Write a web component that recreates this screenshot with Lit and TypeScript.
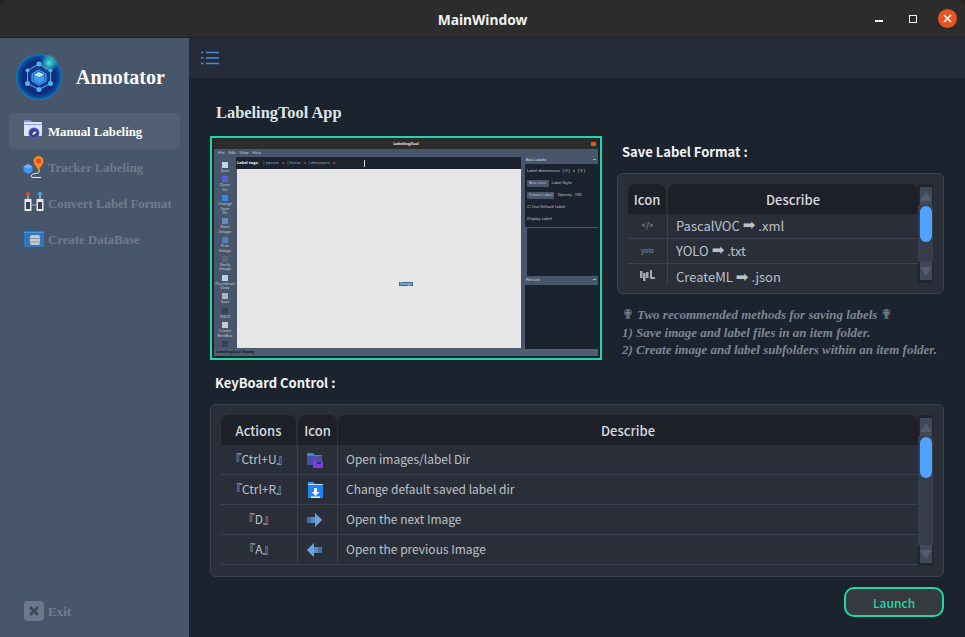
import { LitElement, html, css, svg } from 'lit';
import { customElement } from 'lit/decorators.js';

const ICONS = {
  manual: svg`<path d="M1 1h6l2 2h9a1 1 0 0 1 1 1v12a1 1 0 0 1-1 1H2a1 1 0 0 1-1-1z" fill="#dfe6fb"/><path d="M1 1h6l2 2H1z" fill="#7f8cf0"/><rect x="1" y="5" width="18" height="1" fill="#8f9cf4"/><circle cx="11" cy="14" r="5.500" fill="#4e57c9"/><circle cx="11" cy="14" r="4" fill="#39407a"/><path d="M9 15l3-3 1.500 1.500-3 2.500z" fill="#e8ecff"/>`,
  tracker: svg`<path d="M16 14v3c0 2-8 1-8 4 0 1 1 1.500 3 1.500h7" fill="none" stroke="#e6edf7" stroke-width="1"/><path d="M15.500 1a5 5 0 0 1 5 5c0 3-3 6-5 9-2-3-5-6-5-9a5 5 0 0 1 5-5z" fill="#f08c1c"/><circle cx="15.500" cy="6" r="2.500" fill="#e2492c"/><path d="M5 9l4.500 2.500v5L5 19l-4.500-2.500v-5z" fill="#3f94ee"/><path d="M5 9l4.500 2.500L5 14l-4.500-2.500z" fill="#6fb6fa"/>`,
  convert: svg`<circle cx="5" cy="3" r="2" fill="#e2492c"/><path d="M5 5v3M17 5v3" stroke="#dfe6ee"/><circle cx="17" cy="3" r="2" fill="#35b4ee"/><rect x="1.500" y="8" width="7" height="12" fill="#e6e9ee"/><rect x="3" y="11" width="4" height="7" fill="#39424f"/><rect x="13.500" y="8" width="7" height="12" fill="#e6e9ee"/><rect x="15" y="11" width="4" height="7" fill="#39424f"/><path d="M9 14h4" stroke="#aeb6c2"/>`,
  database: svg`<path d="M1 2h8l2 2h10v16H1z" fill="#2f78bd"/><path d="M1 2h8l2 2H1z" fill="#245f99"/><rect x="1" y="5" width="20" height="1" fill="#4b97db"/><rect x="7" y="8" width="10" height="10" rx="2" fill="#c7cbd0"/><path d="M7 11.500h10M7 15h10" stroke="#8d949c"/>`,
  dir: svg`<path d="M1 2h6l2 2h7v9H1z" fill="#3d80dc"/><rect x="1" y="5" width="15" height="9" fill="#4352a8"/><path d="M7 9h4l1 1.500h5V17H7z" fill="#7a3fd8"/><rect x="11" y="11" width="4" height="2" fill="#3a2a78"/>`,
  save: svg`<path d="M2 1h5l2 2h8v14H2z" fill="#2f9bf5"/><rect x="2" y="4" width="15" height="13" fill="#1f84f0"/><rect x="2" y="3" width="15" height="1" fill="#bcdcff"/><path d="M8 7h3v4h2.500L9.500 15l-4-4H8z" fill="#f2f7ff"/><rect x="5" y="15.500" width="9" height="1.500" fill="#f2f7ff"/>`,
  next: svg`<path d="M1 6h8V2l7 7-7 7v-4H1z" fill="#3f6fa8"/><path d="M9 2l7 7-7 7z" fill="#6ea3de"/><rect x="5" y="6" width="4" height="6" fill="#5589c4"/>`,
  prev: svg`<path d="M16 6H8V2L1 9l7 7v-4h8z" fill="#3f6fa8"/><path d="M8 2L1 9l7 7z" fill="#6ea3de"/><rect x="8" y="6" width="4" height="6" fill="#5589c4"/>`,
  createml: svg`<g fill="#a3a7ae"><rect x="0" y="1" width="2.500" height="7"/><rect x="3" y="3" width="2.500" height="8"/><rect x="6" y="2" width="2.500" height="6"/><rect x="10" y="0" width="2" height="9"/><path d="M10 7h5v2h-5z"/></g>`,
};

const MINI_TOOLS = [
  { color: '#c8d2de', label: 'Save' },
  { color: '#5560d8', label: 'Open Dir' },
  { color: '#2a8cf0', label: 'Change Save Dir' },
  { color: '#5f8dc0', label: 'Next Image' },
  { color: '#4b7fc0', label: 'Prev Image' },
  { color: '#5c6672', label: 'Verify Image' },
  { color: '#b9d0ea', label: 'Thumbnail View' },
  { color: '#aeb4bc', label: 'Save' },
  { color: '#39424f', label: 'YOLO' },
  { color: '#c5cbd3', label: 'Create RectBox' },
  { color: '#39424f', label: '' },
];

const FORMATS = [
  { icon: html`<span class="code">&lt;/&gt;</span>`, name: 'PascalVOC', ext: '.xml' },
  { icon: html`<span class="yolo">yolo</span>`, name: 'YOLO', ext: '.txt' },
  { icon: html`<svg viewBox="0 0 15 11">${ICONS.createml}</svg>`, name: 'CreateML', ext: '.json' },
];

const KEYS = [
  { key: '『Ctrl+U』', icon: ICONS.dir, text: 'Open images/label Dir' },
  { key: '『Ctrl+R』', icon: ICONS.save, text: 'Change default saved label dir' },
  { key: '『D』', icon: ICONS.next, text: 'Open the next Image' },
  { key: '『A』', icon: ICONS.prev, text: 'Open the previous Image' },
];

@customElement('app-root')
export class AppRoot extends LitElement {
  static styles = css`
    :host {
      display: block;
      width: 965px;
      height: 637px;
      overflow: hidden;
      background: #26221f;
      font-family: 'Noto Sans CJK SC', 'Noto Sans', sans-serif;
    }

    .window {
      display: flex;
      flex-direction: column;
      height: 100%;
      border-radius: 8px 8px 0 0;
      overflow: hidden;
    }

    .titlebar {
      flex: none;
      height: 37px;
      display: grid;
      grid-template-columns: 1fr auto 1fr;
      align-items: center;
      background: #2c2c2c;
      border-bottom: 1px solid #222;
      color: #f0f0f0;
      font-family: 'Noto Sans', sans-serif;
      font-size: 13.800px;
      font-weight: 700;
    }

    .titlebar .name {
      grid-column: 2;
      margin-top: 2px;
    }

    .controls {
      display: flex;
      justify-content: flex-end;
      align-items: center;
      padding-right: 8px;
    }

    .min {
      width: 8px;
      height: 2px;
      margin: 4px 26px 0 0;
      background: #f2f2f2;
    }

    .max {
      width: 6px;
      height: 6px;
      margin-right: 21px;
      border: 1px solid #f2f2f2;
    }

    .close {
      width: 19px;
      height: 19px;
      display: block;
    }

    .body {
      flex: 1;
      display: flex;
      min-height: 0;
    }

    .sidebar {
      flex: none;
      width: 189px;
      display: flex;
      flex-direction: column;
      box-sizing: border-box;
      background: #47566a;
      font-family: 'Liberation Serif', serif;
      font-weight: 700;
    }

    .brand {
      display: flex;
      align-items: center;
      gap: 14px;
      padding: 16px 0 0 16px;
      color: #fff;
      font-size: 20px;
    }

    .brand svg {
      width: 46px;
      height: 46px;
    }

    .nav {
      display: flex;
      flex-direction: column;
      margin: 13px 9px 0;
    }

    .nav-item {
      height: 36px;
      display: flex;
      align-items: center;
      gap: 3px;
      padding-left: 14px;
      border-radius: 4px;
      color: #6f7c8d;
      font-size: 12.800px;
    }

    .nav-item span {
      margin-top: 2px;
    }

    .nav-item.active {
      background: #525f72;
      color: #fff;
    }

    .nav-item svg {
      width: 22px;
      height: 24px;
      flex: none;
    }

    .exit {
      margin: auto 0 16px 24px;
      display: flex;
      align-items: center;
      gap: 4px;
      color: #6d7f97;
      font-size: 13px;
    }

    .exit span {
      margin-top: 2px;
    }

    .exit svg {
      width: 20px;
      height: 20px;
    }

    .content {
      flex: 1;
      min-width: 0;
      display: flex;
      flex-direction: column;
      background: #1a232e;
    }

    .topbar {
      flex: none;
      height: 40px;
      display: flex;
      align-items: center;
      padding-left: 12px;
      background: #252c37;
    }

    .topbar svg {
      width: 18px;
      height: 14px;
    }

    .page {
      flex: 1;
      display: flex;
      flex-direction: column;
      padding: 0 21px;
    }

    .app-title {
      height: 58px;
      padding: 25px 0 0 6px;
      box-sizing: border-box;
      color: #dfe3e8;
      font: 700 16.400px 'Liberation Serif', serif;
    }

    .top-row {
      display: flex;
      gap: 15px;
    }

    .side {
      flex: 1;
      min-width: 0;
    }

    .heading {
      color: #f2f4f6;
      font-size: 13px;
      font-weight: 700;
      line-height: 18px;
    }

    .side .heading {
      padding: 7px 0 12px 5px;
    }

    .card {
      display: flex;
      box-sizing: border-box;
      border: 1px solid #3a4453;
      border-radius: 6px;
      background: #2a2e39;
    }

    .side .card {
      height: 121px;
      padding: 10px 10px 0;
    }

    .table {
      flex: 1;
      min-width: 0;
      color: #bcc1c9;
    }

    .row {
      display: grid;
      align-items: center;
      border-bottom: 1px solid #3b4150;
    }

    .row > div {
      height: 100%;
      box-sizing: border-box;
      display: flex;
      align-items: center;
      border-left: 1px solid #3b4150;
    }

    .row > div:first-child {
      border-left: 0;
    }

    .row.head {
      border: 0;
      height: 30px;
      font-size: 13px;
      font-weight: 500;
      color: #d8dbe0;
    }

    .row.head > div {
      justify-content: center;
      border: 0;
      border-radius: 8px 8px 0 0;
      background: #1e2027;
      margin-left: 1px;
      padding: 0;
    }

    .row.head > div:first-child {
      margin-left: 0;
      margin-right: 1px;
    }

    .center {
      justify-content: center;
    }

    .text {
      padding-left: 8px;
      padding-bottom: 2px;
    }

    .format {
      height: 99px;
      font-size: 13px;
      line-height: 1;
    }

    .format .row {
      grid-template-columns: 39px 1fr;
      height: 25px;
      box-sizing: border-box;
    }

    .format .row.head {
      height: 30px;
    }

    /* the third row runs into the bottom of the table, its lines stop at 99px */
    .format .row:last-child {
      height: 19px;
      border-bottom: 0;
    }

    .format .row:last-child > div {
      align-items: flex-start;
      padding-top: 6px;
      padding-bottom: 0;
    }

    .format .row svg {
      width: 15px;
      height: 11px;
    }

    .code {
      color: #a3a7ae;
      font-size: 8px;
      padding-bottom: 2px;
    }

    .yolo {
      color: #8f939b;
      font-size: 6.500px;
      padding-bottom: 2px;
    }

    .arrow {
      font-family: 'DejaVu Sans', sans-serif;
      font-size: 15px;
      line-height: 1;
      margin: 0 3px;
    }

    .notes {
      margin: 12px 0 0 5px;
      color: #7d8692;
      font: italic 700 13px/17.500px 'Liberation Serif', 'DejaVu Serif', serif;
      white-space: nowrap;
    }

    .notes .cross {
      font-style: normal;
      font-family: 'DejaVu Sans', sans-serif;
      font-size: 14px;
      line-height: 1;
    }

    .keys-heading {
      padding: 14px 0 12px 5px;
    }

    .keys-card {
      height: 173px;
      padding: 10px 10px 0;
    }

    .keys {
      height: 151px;
      overflow: hidden;
      font-size: 12px;
    }

    .keys .row {
      grid-template-columns: 76px 40px 1fr;
      height: 30px;
      box-sizing: border-box;
    }

    .keys .row svg {
      width: 18px;
      height: 18px;
      margin-right: 6px;
    }

    .key {
      padding-bottom: 2px;
    }

    .scrollbar {
      flex: none;
      width: 15px;
      display: flex;
      flex-direction: column;
      align-items: center;
      background: #1f2631;
    }

    .format-bar {
      height: 99px;
    }

    .keys-bar {
      height: 151px;
    }

    .scrollbar .step {
      flex: none;
      width: 12px;
      height: 18px;
      margin: 3px 0 0;
      display: flex;
      align-items: center;
      justify-content: center;
      background: #414958;
    }

    .scrollbar .step.down {
      margin: 0 0 3px;
    }

    .tri-up,
    .tri-down {
      width: 0;
      height: 0;
      border-left: 6px solid transparent;
      border-right: 6px solid transparent;
    }

    .tri-up {
      border-bottom: 9px solid #525c6d;
    }

    .tri-down {
      border-top: 9px solid #525c6d;
    }

    .track {
      flex: 1;
      align-self: stretch;
      display: flex;
      justify-content: center;
      background: #363c49;
    }

    .thumb {
      width: 12px;
      margin-top: 1px;
      border-radius: 6px;
      background: #4fa3ff;
    }

    .footer {
      display: flex;
      justify-content: flex-end;
      margin-top: 10px;
    }

    .launch {
      width: 100px;
      height: 30px;
      padding: 0;
      box-sizing: border-box;
      border: 2px solid #1fd8a4;
      border-radius: 10px;
      background: #343a3e;
      color: #1fd8a4;
      font: 500 12px 'Noto Sans CJK SC', sans-serif;
    }

    /* little preview of the labeling tool */
    .shot {
      flex: none;
      width: 392px;
      height: 224px;
      box-sizing: border-box;
      border: 2px solid #1fd8a4;
      padding: 1px 2px 2px;
      display: flex;
      flex-direction: column;
      background: #1a232e;
      font-family: 'Noto Sans', sans-serif;
      font-size: 4px;
      color: #c6ced8;
      line-height: 1.1;
    }

    .m-title {
      flex: none;
      height: 10px;
      display: grid;
      grid-template-columns: 1fr auto 1fr;
      align-items: center;
      background: #2c2c2c;
      color: #eee;
      font-weight: 700;
    }

    .m-title span:first-child {
      grid-column: 2;
    }

    .m-close {
      justify-self: end;
      margin-right: 2px;
      width: 5px;
      height: 4px;
      background: #e95420;
      border-radius: 1px;
    }

    .m-body {
      flex: 1;
      min-height: 0;
      display: grid;
      grid-template-columns: 22px 1fr 74px;
      grid-template-rows: 8px minmax(0, 1fr) 7px;
      background: #47566a;
    }

    .m-menu {
      grid-column: 1 / 4;
      display: flex;
      gap: 4px;
      align-items: center;
      padding-left: 4px;
    }

    .m-tools {
      display: flex;
      flex-direction: column;
      align-items: center;
      gap: 3px;
      padding-top: 5px;
      min-height: 0;
      overflow: hidden;
      text-align: center;
    }

    .m-tool {
      display: flex;
      flex-direction: column;
      align-items: center;
      gap: 1px;
      width: 11px;
    }

    .m-tool i {
      display: block;
      width: 6px;
      height: 6px;
      flex: none;
    }

    .m-center {
      display: flex;
      flex-direction: column;
      margin-right: 3px;
      min-width: 0;
    }

    .m-tags {
      flex: none;
      height: 12px;
      display: flex;
      align-items: center;
      gap: 3px;
      padding-left: 1px;
      background: #1a232e;
      color: #aab3bf;
      white-space: nowrap;
    }

    .m-tags em {
      margin-right: 2px;
      color: #eef1f4;
      font-style: normal;
      font-weight: 700;
    }

    .m-tags b {
      color: #1fd8a4;
      font-weight: 400;
      margin-right: -2px;
    }

    .m-tags u {
      color: #e53935;
      text-decoration: none;
      font-weight: 700;
    }

    .m-input {
      width: 26px;
      height: 7px;
      margin-left: -2px;
      background: #20242c;
      border-right: 1px solid #d0d4da;
    }

    .m-canvas {
      flex: 1;
      margin: 0 0 1px 1px;
      display: flex;
      align-items: flex-start;
      background: #e6e6e6;
    }

    .m-canvas span {
      padding: 0 1px;
      margin: 113px 0 0 162px;
      background: #3c6896;
      color: #e6eef6;
    }

    .m-panels {
      display: flex;
      flex-direction: column;
      min-height: 0;
    }

    .m-head {
      flex: none;
      height: 7px;
      display: flex;
      align-items: center;
      justify-content: space-between;
      padding: 0 2px;
      color: #dfe5ec;
    }

    .m-head.low {
      height: 9px;
    }

    .m-pane {
      margin-left: 1px;
      background: #1a232e;
      display: flex;
      flex-direction: column;
      padding: 3px 2px;
      gap: 3px;
      box-sizing: border-box;
    }

    .m-pane.one {
      flex: none;
      height: 64px;
      border-bottom: 1px solid #47566a;
    }

    .m-pane.two {
      flex: none;
      height: 48px;
      margin-left: 3px;
    }

    .m-pane.three {
      flex: 1;
    }

    .m-line {
      height: 9px;
      display: flex;
      align-items: center;
      gap: 3px;
      white-space: nowrap;
    }

    .m-btn {
      background: #47566a;
      padding: 1px 2px;
    }

    .m-status {
      grid-column: 1 / 4;
      display: flex;
      align-items: center;
      padding-left: 2px;
      background: #4e5f72;
      color: #10161c;
      font-weight: 700;
    }
  `;

  private _navItem(icon: unknown, label: string, active = false) {
    return html`
      <div class="nav-item ${active ? 'active' : ''}">
        <svg viewBox="0 0 22 24">${icon}</svg>
        <span>${label}</span>
      </div>
    `;
  }

  private _logo() {
    return html`
      <svg viewBox="0 0 46 46">
        <defs>
          <radialGradient id="lg" cx="50%" cy="50%" r="50%">
            <stop offset="0%" stop-color="#1c4fb0" />
            <stop offset="70%" stop-color="#0c2a78" />
            <stop offset="90%" stop-color="#0a4f9c" />
            <stop offset="100%" stop-color="#0c86c8" />
          </radialGradient>
          <radialGradient id="lh" cx="50%" cy="50%" r="50%">
            <stop offset="0%" stop-color="#3ff0e0" />
            <stop offset="100%" stop-color="#3ff0e0" stop-opacity="0" />
          </radialGradient>
        </defs>
        <circle cx="23" cy="23" r="23" fill="url(#lg)" />
        <circle cx="33" cy="9" r="9" fill="url(#lh)" />
        <path d="M23 10l11.500 6.500v13L23 35.500 11.500 29.500v-13z" fill="none" stroke="#7cc4f0" stroke-width="0.800" />
        <path d="M23 16l7 4v7l-7 4-7-4v-7z" fill="#1a6ad0" stroke="#69b8f2" stroke-width="0.800" />
        <path d="M23 18l5 2.800-5 2.800-5-2.800z" fill="#bfe6ff" />
        <path d="M18 21.500l5 2.800v5L18 26.500zM28 21.500l-5 2.800v5l5-2.800z" fill="#3fa0ee" />
        <g fill="#4db6f2">
          <circle cx="23" cy="10" r="2.500" />
          <circle cx="34.500" cy="16.500" r="2" />
          <circle cx="34.500" cy="29.500" r="2.500" />
          <circle cx="23" cy="35.500" r="2.500" />
          <circle cx="11.500" cy="29.500" r="2.500" />
          <circle cx="11.500" cy="16.500" r="2" />
        </g>
      </svg>
    `;
  }

  private _scrollbar(cls: string, thumbHeight: number) {
    return html`
      <div class="scrollbar ${cls}">
        <div class="step"><div class="tri-up"></div></div>
        <div class="track"><div class="thumb" style="height:${thumbHeight}px"></div></div>
        <div class="step down"><div class="tri-down"></div></div>
      </div>
    `;
  }

  private _shot() {
    return html`
      <div class="shot">
        <div class="m-title"><span>LabelingTool</span><span class="m-close"></span></div>
        <div class="m-body">
          <div class="m-menu"><span>File</span><span>Edit</span><span>View</span><span>Help</span></div>
          <div class="m-tools">
            ${MINI_TOOLS.map(
              (t) => html`
                <div class="m-tool">
                  <i style="background:${t.color}"></i>
                  <span>${t.label}</span>
                </div>
              `
            )}
          </div>
          <div class="m-center">
            <div class="m-tags">
              <em>Label tags:</em><b>[</b><span>person</span><u>x</u><b>[</b><span>horse</span><u>x</u><b>[</b
              ><span>dinosaurs</span><u>x</u><b>[</b><span class="m-input"></span>
            </div>
            <div class="m-canvas"><span>Image</span></div>
          </div>
          <div class="m-panels">
            <div class="m-head"><span>Box Labels</span><span>▪▪</span></div>
            <div class="m-pane one">
              <div class="m-line"><span>Label dimensions</span><span>[ 0 ]</span><span>x</span><span>[ 0 ]</span></div>
              <div class="m-line"><span class="m-btn">Box color</span><span>Label Style</span></div>
              <div class="m-line"><span class="m-btn">Create Label</span><span>Opacity</span><span>100</span></div>
              <div class="m-line"><span>☐ Use Default Label</span></div>
              <div class="m-line"><span>Display Label</span></div>
            </div>
            <div class="m-pane two"></div>
            <div class="m-head low"><span>File List</span><span>▪▪</span></div>
            <div class="m-pane three"></div>
          </div>
          <div class="m-status">LabelingTool Ready</div>
        </div>
      </div>
    `;
  }

  render() {
    return html`
      <div class="window">
        <header class="titlebar">
          <span class="name">MainWindow</span>
          <div class="controls">
            <span class="min"></span>
            <span class="max"></span>
            <svg class="close" viewBox="0 0 19 19">
              <circle cx="9.500" cy="9.500" r="9.500" fill="#e95420" />
              <path d="M6 6l7 7M13 6l-7 7" stroke="#fff" stroke-width="1.600" />
            </svg>
          </div>
        </header>
        <div class="body">
          <aside class="sidebar">
            <div class="brand">${this._logo()}<span>Annotator</span></div>
            <nav class="nav">
              ${this._navItem(ICONS.manual, 'Manual Labeling', true)}
              ${this._navItem(ICONS.tracker, 'Tracker Labeling')}
              ${this._navItem(ICONS.convert, 'Convert Label Format')}
              ${this._navItem(ICONS.database, 'Create DataBase')}
            </nav>
            <div class="exit">
              <svg viewBox="0 0 20 20">
                <rect width="20" height="20" rx="4" fill="#6d798b" />
                <path d="M6 6l8 8M14 6l-8 8" stroke="#3f4b5b" stroke-width="3" />
              </svg>
              <span>Exit</span>
            </div>
          </aside>
          <main class="content">
            <div class="topbar">
              <svg viewBox="0 0 18 14" fill="none" stroke="#4a8ad8" stroke-width="1.600">
                <path d="M5 1.500h13M5 7h13M5 12.500h13M0 1.500h2.500M0 7h2.500M0 12.500h2.500" />
              </svg>
            </div>
            <div class="page">
              <div class="app-title">LabelingTool App</div>
              <div class="top-row">
                ${this._shot()}
                <div class="side">
                  <div class="heading">Save Label Format :</div>
                  <div class="card">
                    <div class="table format">
                      <div class="row head"><div>Icon</div><div>Describe</div></div>
                      ${FORMATS.map(
                        (f) => html`
                          <div class="row">
                            <div class="center">${f.icon}</div>
                            <div class="text">${f.name}<span class="arrow">➡</span>${f.ext}</div>
                          </div>
                        `
                      )}
                    </div>
                    ${this._scrollbar('format-bar', 36)}
                  </div>
                  <div class="notes">
                    <span class="cross">✟</span> Two recommended methods for saving labels <span class="cross">✟</span><br />
                    1) Save image and label files in an item folder.<br />
                    2) Create image and label subfolders within an item folder.
                  </div>
                </div>
              </div>
              <div class="heading keys-heading">KeyBoard Control :</div>
              <div class="card keys-card">
                <div class="table keys">
                  <div class="row head"><div>Actions</div><div>Icon</div><div>Describe</div></div>
                  ${KEYS.map(
                    (k) => html`
                      <div class="row">
                        <div class="center key">${k.key}</div>
                        <div class="center"><svg viewBox="0 0 18 18">${k.icon}</svg></div>
                        <div class="text">${k.text}</div>
                      </div>
                    `
                  )}
                </div>
                ${this._scrollbar('keys-bar', 41)}
              </div>
              <div class="footer"><button class="launch">Launch</button></div>
            </div>
          </main>
        </div>
      </div>
    `;
  }
}
